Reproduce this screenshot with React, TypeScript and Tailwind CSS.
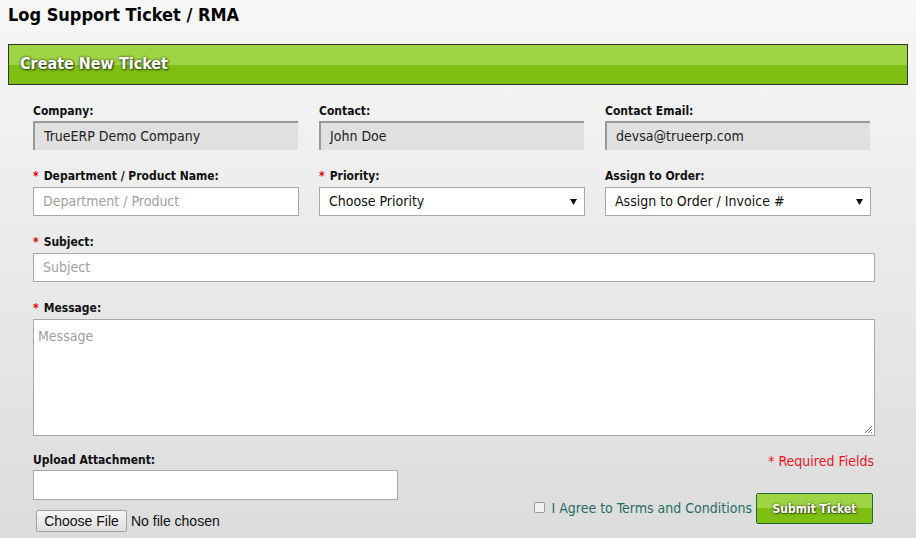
import React from "react";

const font = { fontFamily: '"DejaVu Sans Condensed", "DejaVu Sans", sans-serif' };

function Label({ text, req }: { text: string; req?: boolean }) {
  return (
    <div className="h-[16px] text-[12px] font-bold leading-[16px] text-[#111]">
      {req && <span className="text-[#e60000] mr-[5px]">*</span>}
      {text}
    </div>
  );
}

function ReadOnly({ value }: { value: string }) {
  return (
    <div className="mt-[2px] h-[29px] w-[265px] bg-[#e0e0e0] border-t-2 border-l-2 border-[#999] pl-[9px] text-[14px] leading-[26px] text-[#222]">
      {value}
    </div>
  );
}

function Input({ ph, w }: { ph: string; w: string }) {
  return (
    <div className={`mt-[3px] h-[29px] ${w} bg-white border border-[#a9a9a9] pl-[9px] text-[14px] leading-[27px] text-[#a0a0a0]`}>
      {ph}
    </div>
  );
}

function Select({ value }: { value: string }) {
  return (
    <div className="mt-[3px] h-[29px] w-[266px] bg-white border border-[#a9a9a9] pl-[9px] pr-[7px] flex items-center justify-between text-[14px] text-[#111]">
      <span>{value}</span>
      <svg width="7" height="7" viewBox="0 0 7 7"><path d="M0 1 H7 L3.5 7 Z" fill="#111" /></svg>
    </div>
  );
}

export default function App() {
  return (
    <div style={font} className="w-[916px] h-[538px] overflow-hidden bg-gradient-to-b from-[#f7f7f7] to-[#dcdcdc]">
      <div className="pl-[8px] pt-[3px] h-[44px] text-[18px] font-bold text-[#000] leading-[24px]">
        Log Support Ticket / RMA
      </div>
      <div className="mx-[8px] w-[900px] h-[41px] border border-[#333] flex flex-col relative">
        <div className="h-[20px] bg-[#9fd545]" />
        <div className="flex-1 bg-[#7dbf12]" />
        <div
          className="absolute left-[11px] top-[7px] text-[16px] font-bold text-white leading-[24px]"
          style={{ textShadow: "0 0 3px rgba(0,0,0,0.75), 1px 1px 2px rgba(0,0,0,0.5)" }}
        >
          Create New Ticket
        </div>
      </div>
      <div className="pl-[33px] pt-[18px]">
        <div className="flex gap-[21px]">
          <div><Label text="Company:" /><ReadOnly value="TrueERP Demo Company" /></div>
          <div><Label text="Contact:" /><ReadOnly value="John Doe" /></div>
          <div><Label text="Contact Email:" /><ReadOnly value="devsa@trueerp.com" /></div>
        </div>
        <div className="flex gap-[20px] mt-[18px]">
          <div><Label text="Department / Product Name:" req /><Input ph="Department / Product" w="w-[266px]" /></div>
          <div><Label text="Priority:" req /><Select value="Choose Priority" /></div>
          <div><Label text="Assign to Order:" /><Select value="Assign to Order / Invoice #" /></div>
        </div>
        <div className="mt-[18px]">
          <Label text="Subject:" req />
          <Input ph="Subject" w="w-[842px]" />
        </div>
        <div className="mt-[18px]">
          <Label text="Message:" req />
          <div className="relative mt-[3px] h-[117px] w-[842px] bg-white border border-[#a9a9a9] pl-[4px] pt-[6px] text-[14px] leading-[20px] text-[#a0a0a0]">
            Message
            <svg className="absolute right-[1px] bottom-[1px]" width="9" height="9" viewBox="0 0 9 9">
              <path d="M8 1 L1 8 M8 4 L4 8 M8 7 L7 8" stroke="#777" strokeWidth="1" />
            </svg>
          </div>
        </div>
        <div className="flex mt-[16px] w-[840px] justify-between">
          <div>
            <Label text="Upload Attachment:" />
            <div className="mt-[2px] h-[30px] w-[365px] bg-white border border-[#a9a9a9]" />
            <div className="mt-[10px] ml-[3px] flex items-center gap-[4px]" style={{ fontFamily: '"Liberation Sans", Arial, sans-serif' }}>
              <div className="h-[22px] w-[91px] text-center border border-[#a0a0a0] rounded-[2px] bg-gradient-to-b from-[#f5f5f5] to-[#e0e0e0] text-[14px] leading-[20px] text-[#111]">
                Choose File
              </div>
              <span className="text-[14px] text-[#111]">No file chosen</span>
            </div>
          </div>
          <div className="flex flex-col items-end">
            <div className="text-[14px] text-[#f0141e] leading-[18px] mr-[-1px]">* Required Fields</div>
            <div className="flex items-center mt-[23px]">
              <div className="w-[11px] h-[11px] border border-[#999] rounded-[2px] bg-[#f2f2f2] mr-[6px] mb-[2px]" />
              <span className="text-[14px] text-[#1f6e5e] mr-[4px]">I Agree to Terms and Conditions</span>
              <div className="relative h-[31px] w-[117px] border border-[#1e6a30] rounded-[2px] overflow-hidden flex flex-col">
                <div className="h-[14px] bg-[#9fd545]" />
                <div className="flex-1 bg-[#7dbf12]" />
                <div
                  className="absolute inset-0 flex items-center justify-center text-[12px] font-bold text-white"
                  style={{ textShadow: "0 0 3px rgba(0,0,0,0.7), 1px 1px 1px rgba(0,0,0,0.4)" }}
                >
                  Submit Ticket
                </div>
              </div>
            </div>
          </div>
        </div>
      </div>
    </div>
  );
}
